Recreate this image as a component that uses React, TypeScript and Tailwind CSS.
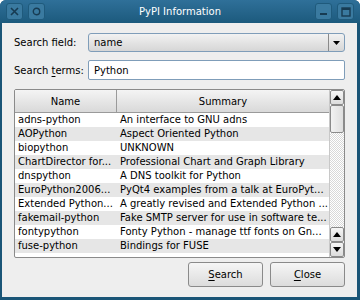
const rows: [string, string][] = [
  ["adns-python", "An interface to GNU adns"],
  ["AOPython", "Aspect Oriented Python"],
  ["biopython", "UNKNOWN"],
  ["ChartDirector for...", "Professional Chart and Graph Library"],
  ["dnspython", "A DNS toolkit for Python"],
  ["EuroPython2006...", "PyQt4 examples from a talk at EuroPyt..."],
  ["Extended Python...", "A greatly revised and Extended Python ..."],
  ["fakemail-python", "Fake SMTP server for use in software te..."],
  ["fontypython", "Fonty Python - manage ttf fonts on Gn..."],
  ["fuse-python", "Bindings for FUSE"],
];

const TitleBtn = ({ children }: { children: React.ReactNode }) => (
  <div className="w-[17px] h-[17px] rounded-[3px] border border-[#1f5a7c] bg-[#3a7aa0] flex items-center justify-center">
    {children}
  </div>
);

const ScrollBtn = ({ up }: { up: boolean }) => (
  <div className="h-[15px] shrink-0 border border-[#8a8a8a] rounded-[2px] bg-gradient-to-b from-[#f6f6f6] to-[#dcdcdc] flex items-center justify-center">
    <svg width="8" height="5" viewBox="0 0 8 5">
      <path d={up ? "M0 5 L4 0 L8 5 Z" : "M0 0 L4 5 L8 0 Z"} fill="#000" />
    </svg>
  </div>
);

export default function App() {
  return (
    <div className="w-[360px] h-[300px] flex flex-col bg-[#1a5577] rounded-t-[6px] overflow-hidden font-['DejaVu_Sans',sans-serif] text-[10px] text-black">
      <div className="h-[23px] shrink-0 bg-gradient-to-b from-[#2f7099] to-[#1c5a7d] flex items-center px-[6px] gap-[5px]">
        <TitleBtn>
          <svg width="9" height="9" viewBox="0 0 9 9">
            <path d="M1 1 L8 8 M8 1 L1 8" stroke="#173b52" strokeWidth="1.6" />
          </svg>
        </TitleBtn>
        <TitleBtn>
          <svg width="9" height="9" viewBox="0 0 9 9">
            <circle cx="4.5" cy="4.5" r="3.2" stroke="#173b52" strokeWidth="1.4" fill="none" />
          </svg>
        </TitleBtn>
        <div className="flex-1 text-center text-white text-[10px] leading-none">PyPI Information</div>
        <TitleBtn>
          <svg width="9" height="9" viewBox="0 0 9 9">
            <rect x="1" y="6" width="7" height="2" fill="#173b52" />
          </svg>
        </TitleBtn>
        <TitleBtn>
          <svg width="10" height="10" viewBox="0 0 10 10">
            <rect x="1" y="1" width="8" height="8" stroke="#173b52" strokeWidth="1.4" fill="none" />
            <rect x="1" y="1" width="8" height="2" fill="#173b52" />
          </svg>
        </TitleBtn>
      </div>
      <div className="flex-1 ml-[2px] mr-[3px] mb-[3px] bg-[#eeeeee] flex flex-col px-[12px] pt-[10px]">
        <div className="flex items-center h-[19px]">
          <div className="w-[74px]">Search field:</div>
          <div className="flex-1 h-[19px] rounded-[3px] border border-[#7f9db9] bg-gradient-to-b from-[#f2f2f2] to-[#d6d6d6] flex items-center">
            <div className="flex-1 pl-[5px]">name</div>
            <div className="w-[16px] h-full border-l border-[#8a8a8a] flex items-center justify-center">
              <svg width="7" height="4" viewBox="0 0 7 4">
                <path d="M0 0 L3.5 4 L7 0 Z" fill="#000" />
              </svg>
            </div>
          </div>
        </div>
        <div className="flex items-center h-[20px] mt-[8px]">
          <div className="w-[74px]">
            Search <span className="underline underline-offset-2">t</span>erms:
          </div>
          <div className="flex-1 h-[20px] rounded-[2px] border border-[#7f9db9] bg-white flex items-center pl-[5px]">
            Python
          </div>
        </div>
        <div className="mt-[9px] h-[169px] border border-[#8a8a8a] rounded-[2px] bg-white flex overflow-hidden">
          <div className="flex-1 flex flex-col min-w-0">
            <div className="h-[23px] shrink-0 flex bg-gradient-to-b from-[#f4f4f4] to-[#d8d8d8]">
              <div className="w-[102px] border-r border-b border-[#9a9a9a] flex items-center justify-center">Name</div>
              <div className="flex-1 border-b border-[#9a9a9a] flex items-center justify-center">Summary</div>
            </div>
            {rows.map(([name, summary], i) => (
              <div
                key={name}
                className={`h-[14px] shrink-0 flex items-center leading-none whitespace-nowrap ${i % 2 === 1 ? "bg-[#e6e6e6]" : "bg-white"}`}
              >
                <div className="w-[102px] shrink-0 pl-[3px] overflow-hidden">{name}</div>
                <div className="flex-1 pl-[3px] overflow-hidden">{summary}</div>
              </div>
            ))}
          </div>
          <div className="w-[15px] flex flex-col border-l border-[#c8c8c8]">
            <ScrollBtn up />
            <div className="h-[28px] shrink-0 border border-[#8a8a8a] rounded-[2px] bg-gradient-to-r from-[#f2f2f2] to-[#dedede]" />
            <div className="flex-1 bg-[repeating-conic-gradient(#d8d8d8_0_25%,#ffffff_0_50%)] bg-[length:2px_2px]" />
            <ScrollBtn up />
            <ScrollBtn up={false} />
          </div>
        </div>
        <div className="flex justify-end gap-[7px] mt-[4px]">
          <button className="w-[75px] h-[25px] rounded-[3px] border border-[#8a8a8a] bg-gradient-to-b from-[#f6f6f6] to-[#dcdcdc]">
            <span className="underline underline-offset-2">S</span>earch
          </button>
          <button className="w-[75px] h-[25px] rounded-[3px] border border-[#8a8a8a] bg-gradient-to-b from-[#f6f6f6] to-[#dcdcdc]">
            <span className="underline underline-offset-2">C</span>lose
          </button>
        </div>
      </div>
    </div>
  );
}
